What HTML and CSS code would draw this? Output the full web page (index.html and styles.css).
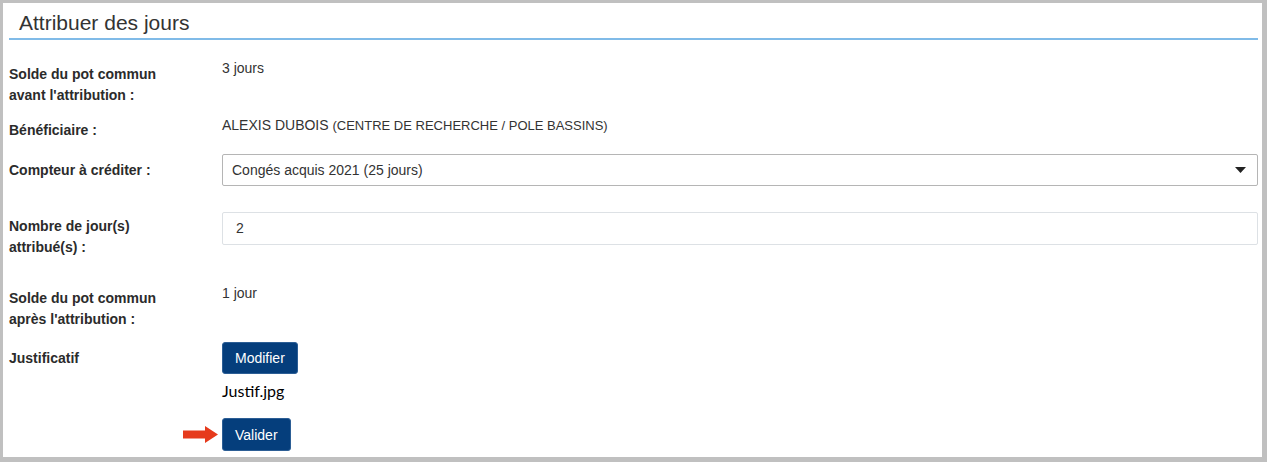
FILE: index.html
```html
<!DOCTYPE html>
<html lang="fr">

<head>
	<meta charset="UTF-8">
	<meta name="viewport" content="width=device-width, initial-scale=1.0">
	<title>Attribuer des jours</title>
	<link rel="stylesheet" href="styles.css">
</head>

<body>
	<div class="frame">
		<h2 class="title">Attribuer des jours</h2>

		<form class="form">
			<div class="row row-first">
				<div class="label">Solde du pot commun<br>avant l'attribution :</div>
				<div class="value">3 jours</div>
			</div>

			<div class="row row-benef">
				<div class="label">Bénéficiaire :</div>
				<div class="value">ALEXIS DUBOIS <span class="service">(CENTRE DE RECHERCHE / POLE BASSINS)</span></div>
			</div>

			<div class="row row-counter">
				<div class="label">Compteur à créditer :</div>
				<div class="select">
					<span>Congés acquis 2021 (25 jours)</span>
					<svg class="caret" width="11" height="6" viewBox="0 0 11 6"><path d="M0 0 H11 L5.5 6 Z" fill="#222"/></svg>
				</div>
			</div>

			<div class="row row-days">
				<div class="label">Nombre de jour(s)<br>attribué(s) :</div>
				<div class="input">2</div>
			</div>

			<div class="row row-after">
				<div class="label">Solde du pot commun<br>après l'attribution :</div>
				<div class="value">1 jour</div>
			</div>

			<div class="row row-file">
				<div class="label">Justificatif</div>
				<button type="button" class="btn">Modifier</button>
			</div>

			<div class="filename">Justif.jpg</div>

			<div class="submit">
				<svg class="arrow" width="35" height="17" viewBox="0 0 35 17"><path d="M0 4.5 H22 V0 L35 8.5 L22 17 V12.5 H0 Z" fill="#e63a1c"/></svg>
				<button type="button" class="btn">Valider</button>
			</div>
		</form>
	</div>
</body>
</html>
```

FILE: styles.css
```css
body {
	margin: 0;
	font-family: "Liberation Sans", Arial, sans-serif;
	color: #333;
	background-color: #fff;
}

.frame {
	box-sizing: border-box;
	width: 1267px;
	height: 462px;
	border-style: solid;
	border-color: #c0c0c0;
	border-width: 3px 5px 5px 3px;
	padding: 0 4px 0 6px;
	overflow: hidden;
}

.title {
	margin: 0;
	padding: 7px 10px 2px;
	font-size: 21px;
	font-weight: normal;
	line-height: 26px;
	color: #333;
	border-bottom: 2px solid #80bbe8;
}

.form {
	font-size: 14px;
	line-height: 21px;
}

.row {
	display: flex;
	align-items: flex-start;
}

.label {
	flex: none;
	width: 213px;
	font-weight: bold;
	color: #2b2b2b;
}

.row-first { margin-top: 18px; }
.row-first .label { padding-top: 6px; }

.row-benef { margin-top: 9px; }
.row-benef .label { padding-top: 5px; }

.service {
	font-size: 13px;
}

.row-counter {
	margin-top: 13px;
	align-items: center;
}

.select {
	flex: 1;
	box-sizing: border-box;
	height: 32px;
	display: flex;
	align-items: center;
	justify-content: space-between;
	padding: 0 11px 0 9px;
	border: 1px solid #b5b5b5;
	border-radius: 2px;
	color: #333;
}

.caret {
	display: block;
}

.row-days { margin-top: 26px; }
.row-days .label { padding-top: 4px; }

.input {
	flex: 1;
	box-sizing: border-box;
	height: 33px;
	line-height: 31px;
	padding: 0 13px;
	border: 1px solid #dde1e5;
	border-radius: 2px;
	color: #333;
}

.row-after { margin-top: 25px; }
.row-after .label { padding-top: 5px; }

.row-file {
	margin-top: 12px;
	align-items: center;
}

.btn {
	box-sizing: border-box;
	height: 32px;
	padding: 0 12px;
	font-family: "Liberation Sans", Arial, sans-serif;
	font-size: 14px;
	color: #fff;
	background-color: #053e7c;
	border: 1px solid #2c5e95;
	border-radius: 3px;
	cursor: pointer;
}

.filename {
	margin: 6px 0 0 213px;
	font-family: Lato, "Open Sans", sans-serif;
	font-size: 16px;
	font-weight: normal;
	line-height: 21px;
	color: #000;
}

.submit {
	display: flex;
	align-items: center;
	margin: 17px 0 0 174px;
	gap: 4px;
}

.submit .btn {
	height: 33px;
}
```
